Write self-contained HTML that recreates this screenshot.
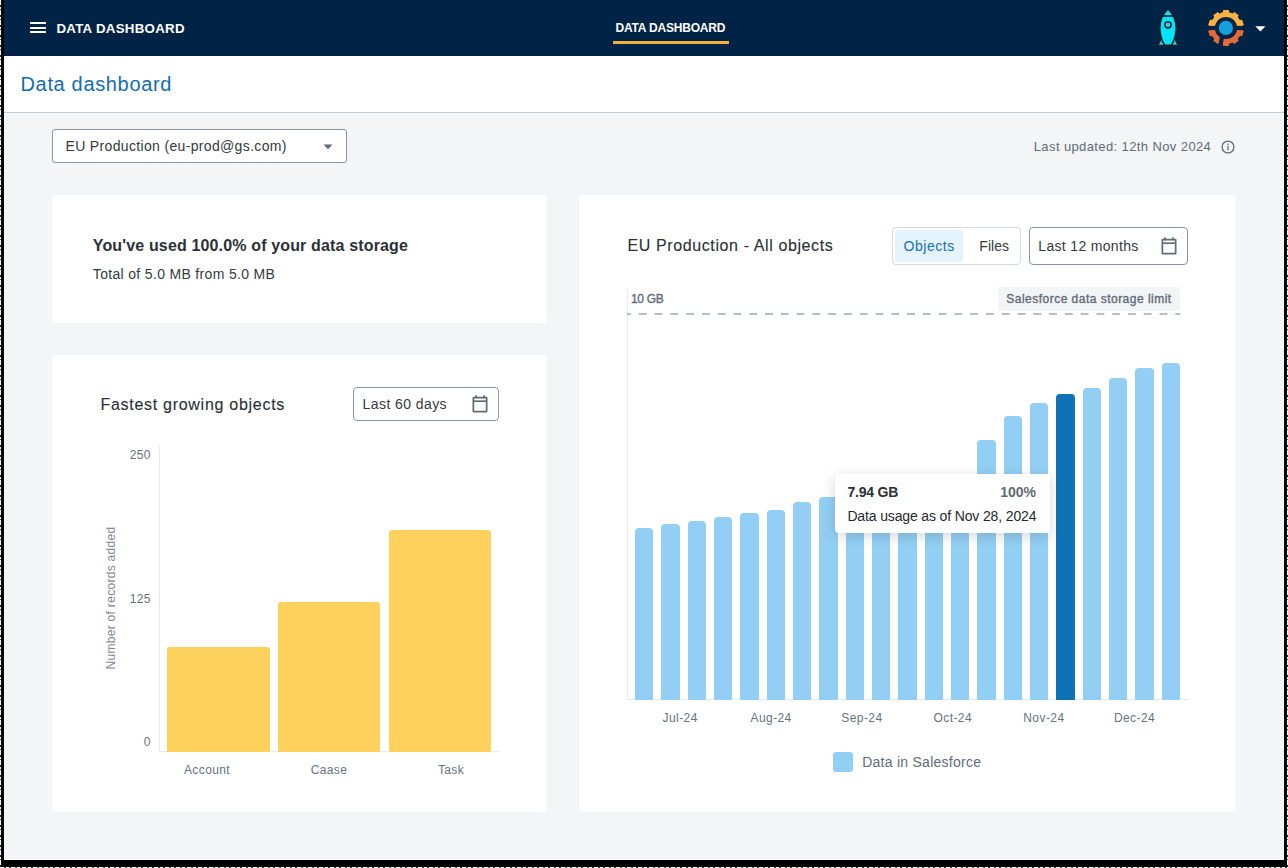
<!DOCTYPE html>
<html><head><meta charset="utf-8"><title>Data dashboard</title>
<style>
html,body{margin:0;padding:0;width:1288px;height:868px;overflow:hidden;background:#000;}
body{position:relative;font-family:"Liberation Sans",sans-serif;}
.t{position:absolute;white-space:nowrap;line-height:1;}
</style></head><body>
<div style="position:absolute;left:0px;top:0px;width:1.3px;height:868px;background:repeating-linear-gradient(180deg,#fff 0 5px,#222 5px 7px,#fff 7px 9px,#555 9px 10px)"></div>
<div style="position:absolute;left:1286.7px;top:0px;width:1.2999999999999545px;height:868px;background:repeating-linear-gradient(180deg,#fff 0 5px,#222 5px 7px,#fff 7px 9px,#4a7a4a 9px 10px)"></div>
<div style="position:absolute;left:0px;top:866.5px;width:1288px;height:1.5px;background:repeating-linear-gradient(90deg,#fff 0 4px,#3a6a3a 4px 6px,#fff 6px 9px,#333 9px 11px)"></div>
<div style="position:absolute;left:4px;top:0px;width:1280px;height:860px;background:#ffffff"></div>
<div style="position:absolute;left:5px;top:113px;width:1278px;height:746px;background:#f4f5f7"></div>
<div style="position:absolute;left:4px;top:0px;width:1280px;height:56px;background:#012345"></div>
<div style="position:absolute;left:30.2px;top:22.3px;width:15.4px;height:2px;background:#fff;border-radius:0.5px"></div>
<div style="position:absolute;left:30.2px;top:26.9px;width:15.4px;height:2px;background:#fff;border-radius:0.5px"></div>
<div style="position:absolute;left:30.2px;top:31.4px;width:15.4px;height:2px;background:#fff;border-radius:0.5px"></div>
<div class="t" style="left:56.40px;top:21.64px;font-size:13.3px;font-weight:700;color:#fff;letter-spacing:0.27px;">DATA DASHBOARD</div>
<div class="t" style="left:615.50px;top:22.44px;font-size:12px;font-weight:700;color:#fff;letter-spacing:-0.19px;">DATA DASHBOARD</div>
<div style="position:absolute;left:613px;top:41px;width:116px;height:3px;background:#f0b23c"></div>
<svg style="position:absolute;left:1157px;top:8px" width="23" height="39" viewBox="0 0 23 39">
<g stroke="#2a1e22" stroke-width="1.6" stroke-linejoin="round" fill="#00e5ff">
<path d="M4.8 29 L0.8 37.6 L7.5 37.6 Z"/><path d="M17.2 29 L21.2 37.6 L14.5 37.6 Z"/>
<path d="M11 0.8 C6 5.5 2.8 12.5 2.8 20 C2.8 27 5 33 7.6 37.3 L14.4 37.3 C17 33 19.2 27 19.2 20 C19.2 12.5 16 5.5 11 0.8 Z"/>
<path d="M5.6 8 L16.4 8" fill="none"/>
<circle cx="11" cy="16.8" r="3.1"/>
</g></svg>
<svg style="position:absolute;left:1205px;top:7px" width="42" height="42" viewBox="0 0 42 42">
<defs><mask id="gm"><rect width="42" height="42" fill="#fff"/><circle cx="21" cy="21" r="11.1" fill="#000"/>
<rect x="0" y="18.9" width="42" height="4.2" fill="#000"/>
<path d="M15.2 28 L13.0 40 L17.2 40 L19.4 28 Z" fill="#000"/></mask>
<clipPath id="gt"><rect x="0" y="0" width="42" height="21"/></clipPath>
<clipPath id="gb"><rect x="0" y="21" width="42" height="21"/></clipPath></defs>
<g mask="url(#gm)"><path d="M17.81 5.32 L18.26 3.11 L23.74 3.11 L24.19 5.32 L27.64 6.44 L29.30 4.92 L33.73 8.13 L32.80 10.19 L34.93 13.12 L37.17 12.87 L38.86 18.07 L36.90 19.19 L36.90 22.81 L38.86 23.93 L37.17 29.13 L34.93 28.88 L32.80 31.81 L33.73 33.87 L29.30 37.08 L27.64 35.56 L24.19 36.68 L23.74 38.89 L18.26 38.89 L17.81 36.68 L14.36 35.56 L12.70 37.08 L8.27 33.87 L9.20 31.81 L7.07 28.88 L4.83 29.13 L3.14 23.93 L5.10 22.81 L5.10 19.19 L3.14 18.07 L4.83 12.87 L7.07 13.12 L9.20 10.19 L8.27 8.13 L12.70 4.92 L14.36 6.44 Z" fill="#fbb241" clip-path="url(#gt)"/><path d="M17.81 5.32 L18.26 3.11 L23.74 3.11 L24.19 5.32 L27.64 6.44 L29.30 4.92 L33.73 8.13 L32.80 10.19 L34.93 13.12 L37.17 12.87 L38.86 18.07 L36.90 19.19 L36.90 22.81 L38.86 23.93 L37.17 29.13 L34.93 28.88 L32.80 31.81 L33.73 33.87 L29.30 37.08 L27.64 35.56 L24.19 36.68 L23.74 38.89 L18.26 38.89 L17.81 36.68 L14.36 35.56 L12.70 37.08 L8.27 33.87 L9.20 31.81 L7.07 28.88 L4.83 29.13 L3.14 23.93 L5.10 22.81 L5.10 19.19 L3.14 18.07 L4.83 12.87 L7.07 13.12 L9.20 10.19 L8.27 8.13 L12.70 4.92 L14.36 6.44 Z" fill="#e4683a" clip-path="url(#gb)"/></g>
<circle cx="20.9" cy="20.9" r="7.1" fill="#159fdc"/>
</svg>
<svg style="position:absolute;left:1254.5px;top:25.5px" width="11" height="6" viewBox="0 0 11 6"><path d="M0.3 0.3 L10.5 0.3 L5.4 5.6 Z" fill="#fff"/></svg>
<div class="t" style="left:20.50px;top:73.67px;font-size:20px;font-weight:400;color:#0f6eb3;letter-spacing:0.66px;">Data dashboard</div>
<div style="position:absolute;left:4px;top:112px;width:1280px;height:1px;background:#c4cad0"></div>
<div style="position:absolute;left:52px;top:129px;width:295px;height:34px;box-sizing:border-box;border:1px solid #8a96a2;border-radius:3px;background:#fff"></div>
<div class="t" style="left:65.50px;top:139.45px;font-size:14px;font-weight:400;color:#343a40;letter-spacing:0.34px;">EU Production (eu-prod@gs.com)</div>
<svg style="position:absolute;left:323px;top:143.5px" width="10" height="6" viewBox="0 0 10 6"><path d="M0.5 0.5 L9.5 0.5 L5 5.3 Z" fill="#5f6b77"/></svg>
<div class="t" style="left:1033.75px;top:140.00px;font-size:13px;font-weight:400;color:#5f6b77;letter-spacing:0.39px;">Last updated: 12th Nov 2024</div>
<svg style="position:absolute;left:1221px;top:139.5px" width="14" height="14" viewBox="0 0 14 14">
<circle cx="7" cy="7" r="5.9" fill="none" stroke="#5f6b77" stroke-width="1.3"/>
<rect x="6.35" y="6" width="1.3" height="4.2" fill="#5f6b77"/><circle cx="7" cy="4.3" r="0.8" fill="#5f6b77"/></svg>
<div style="position:absolute;left:52px;top:195px;width:495px;height:128px;background:#fff;border-radius:4px;box-shadow:0 0 1px rgba(0,0,0,0.04)"></div>
<div style="position:absolute;left:52px;top:355px;width:495px;height:457px;background:#fff;border-radius:4px;box-shadow:0 0 1px rgba(0,0,0,0.04)"></div>
<div style="position:absolute;left:579px;top:195px;width:657px;height:617px;background:#fff;border-radius:4px;box-shadow:0 0 1px rgba(0,0,0,0.04)"></div>
<div class="t" style="left:92.80px;top:237.86px;font-size:16px;font-weight:700;color:#2b3136;letter-spacing:0.15px;">You've used 100.0% of your data storage</div>
<div class="t" style="left:92.80px;top:266.65px;font-size:14px;font-weight:400;color:#343a40;letter-spacing:0.33px;">Total of 5.0 MB from 5.0 MB</div>
<div class="t" style="left:100.40px;top:396.76px;font-size:16px;font-weight:400;color:#2b3136;letter-spacing:0.72px;-webkit-text-stroke:0.12px #2b3136">Fastest growing objects</div>
<div style="position:absolute;left:353px;top:387px;width:146px;height:34px;box-sizing:border-box;border:1px solid #8a96a2;border-radius:4px;background:#fff"></div>
<div class="t" style="left:362.60px;top:397.05px;font-size:14px;font-weight:400;color:#343a40;letter-spacing:0.42px;">Last 60 days</div>
<svg style="position:absolute;left:471.8px;top:395px" width="17" height="18" viewBox="0 0 17 18">
<g fill="none" stroke="#5f6b77" stroke-width="1.7"><rect x="1.35" y="2.6" width="13.3" height="14.1" rx="0.3"/><path d="M1.4 6.2 L14.6 6.2"/><path d="M4 0.3 L4 3.2 M12 0.3 L12 3.2"/></g></svg>
<div style="position:absolute;left:159px;top:444.5px;width:1px;height:307.5px;background:#e8ebee"></div>
<div style="position:absolute;left:159px;top:751px;width:340px;height:1px;background:#e8ebee"></div>
<div class="t" style="right:1137.40px;top:449.14px;font-size:12px;font-weight:400;color:#66727e;letter-spacing:0.3px;">250</div>
<div class="t" style="right:1137.40px;top:592.84px;font-size:12px;font-weight:400;color:#66727e;letter-spacing:0.3px;">125</div>
<div class="t" style="right:1137.40px;top:736.14px;font-size:12px;font-weight:400;color:#66727e;letter-spacing:0.3px;">0</div>
<div style="position:absolute;left:167px;top:647px;width:102.5px;height:104.7px;background:#fdd15b;border-radius:3px 3px 0 0"></div>
<div style="position:absolute;left:277.7px;top:602px;width:102.3px;height:149.7px;background:#fdd15b;border-radius:3px 3px 0 0"></div>
<div style="position:absolute;left:388.7px;top:530px;width:102.3px;height:221.7px;background:#fdd15b;border-radius:3px 3px 0 0"></div>
<div class="t" style="left:107.00px;width:200px;text-align:center;top:764.04px;font-size:12px;font-weight:400;color:#66727e;letter-spacing:0.39px;">Account</div>
<div class="t" style="left:229.00px;width:200px;text-align:center;top:764.04px;font-size:12px;font-weight:400;color:#66727e;letter-spacing:0.39px;">Caase</div>
<div class="t" style="left:351.00px;width:200px;text-align:center;top:764.04px;font-size:12px;font-weight:400;color:#66727e;letter-spacing:0.39px;">Task</div>
<div class="t" style="left:10.5px;top:592.4px;width:200px;height:12px;text-align:center;font-size:12px;color:#7d8893;letter-spacing:0.3px;transform:rotate(-90deg)">Number of records added</div>
<div class="t" style="left:627.50px;top:238.46px;font-size:16px;font-weight:400;color:#2b3136;letter-spacing:0.61px;-webkit-text-stroke:0.12px #2b3136">EU Production - All objects</div>
<div style="position:absolute;left:892px;top:227px;width:129px;height:38px;box-sizing:border-box;border:1px solid #d6dbe0;border-radius:4px;background:#fff"></div>
<div style="position:absolute;left:895px;top:230px;width:68px;height:32px;background:#e5f3fc;border-radius:3px"></div>
<div class="t" style="left:903.50px;top:239.45px;font-size:14px;font-weight:400;color:#1270b4;letter-spacing:0.55px;">Objects</div>
<div class="t" style="left:979.30px;top:239.45px;font-size:14px;font-weight:400;color:#343a40;letter-spacing:0.03px;">Files</div>
<div style="position:absolute;left:1029px;top:227px;width:159px;height:38px;box-sizing:border-box;border:1px solid #8a96a2;border-radius:4px;background:#fff"></div>
<div class="t" style="left:1038.30px;top:239.45px;font-size:14px;font-weight:400;color:#343a40;letter-spacing:0.33px;">Last 12 months</div>
<svg style="position:absolute;left:1160.6px;top:236.8px" width="17" height="18" viewBox="0 0 17 18">
<g fill="none" stroke="#5f6b77" stroke-width="1.7"><rect x="1.35" y="2.6" width="13.3" height="14.1" rx="0.3"/><path d="M1.4 6.2 L14.6 6.2"/><path d="M4 0.3 L4 3.2 M12 0.3 L12 3.2"/></g></svg>
<div style="position:absolute;left:627px;top:289px;width:1px;height:411px;background:#e8ebee"></div>
<div style="position:absolute;left:627px;top:699px;width:561px;height:1px;background:#e8ebee"></div>
<div style="position:absolute;left:998px;top:287px;width:182px;height:24px;background:#f3f4f6;border-radius:3px"></div>
<div class="t" style="left:630.90px;top:292.84px;font-size:12px;font-weight:400;color:#5f6b77;letter-spacing:-0.3px;-webkit-text-stroke:0.35px #5f6b77">10 GB</div>
<div class="t" style="left:1006.30px;top:293.14px;font-size:12px;font-weight:400;color:#5f6b77;letter-spacing:0.48px;-webkit-text-stroke:0.35px #5f6b77">Salesforce data storage limit</div>
<svg style="position:absolute;left:627px;top:312px" width="554" height="4" viewBox="0 0 554 4"><path d="M0 2 L553 2" stroke="#b7bec6" stroke-width="2" stroke-dasharray="7.85 7.93" stroke-dashoffset="3.95"/></svg>
<div style="position:absolute;left:635.00px;top:528px;width:18.3px;height:172px;background:#93cff4;border-radius:4px 4px 0 0"></div>
<div style="position:absolute;left:661.34px;top:524px;width:18.3px;height:176px;background:#93cff4;border-radius:4px 4px 0 0"></div>
<div style="position:absolute;left:687.68px;top:521px;width:18.3px;height:179px;background:#93cff4;border-radius:4px 4px 0 0"></div>
<div style="position:absolute;left:714.02px;top:517px;width:18.3px;height:183px;background:#93cff4;border-radius:4px 4px 0 0"></div>
<div style="position:absolute;left:740.36px;top:513px;width:18.3px;height:187px;background:#93cff4;border-radius:4px 4px 0 0"></div>
<div style="position:absolute;left:766.70px;top:510px;width:18.3px;height:190px;background:#93cff4;border-radius:4px 4px 0 0"></div>
<div style="position:absolute;left:793.04px;top:502px;width:18.3px;height:198px;background:#93cff4;border-radius:4px 4px 0 0"></div>
<div style="position:absolute;left:819.38px;top:497px;width:18.3px;height:203px;background:#93cff4;border-radius:4px 4px 0 0"></div>
<div style="position:absolute;left:845.72px;top:492px;width:18.3px;height:208px;background:#93cff4;border-radius:4px 4px 0 0"></div>
<div style="position:absolute;left:872.06px;top:488px;width:18.3px;height:212px;background:#93cff4;border-radius:4px 4px 0 0"></div>
<div style="position:absolute;left:898.40px;top:484px;width:18.3px;height:216px;background:#93cff4;border-radius:4px 4px 0 0"></div>
<div style="position:absolute;left:924.74px;top:480px;width:18.3px;height:220px;background:#93cff4;border-radius:4px 4px 0 0"></div>
<div style="position:absolute;left:951.08px;top:476px;width:18.3px;height:224px;background:#93cff4;border-radius:4px 4px 0 0"></div>
<div style="position:absolute;left:977.42px;top:440px;width:18.3px;height:260px;background:#93cff4;border-radius:4px 4px 0 0"></div>
<div style="position:absolute;left:1003.76px;top:416px;width:18.3px;height:284px;background:#93cff4;border-radius:4px 4px 0 0"></div>
<div style="position:absolute;left:1030.10px;top:403px;width:18.3px;height:297px;background:#93cff4;border-radius:4px 4px 0 0"></div>
<div style="position:absolute;left:1056.44px;top:394px;width:18.3px;height:306px;background:#0e73b4;border-radius:4px 4px 0 0"></div>
<div style="position:absolute;left:1082.78px;top:388px;width:18.3px;height:312px;background:#93cff4;border-radius:4px 4px 0 0"></div>
<div style="position:absolute;left:1109.12px;top:378px;width:18.3px;height:322px;background:#93cff4;border-radius:4px 4px 0 0"></div>
<div style="position:absolute;left:1135.46px;top:368px;width:18.3px;height:332px;background:#93cff4;border-radius:4px 4px 0 0"></div>
<div style="position:absolute;left:1161.80px;top:363px;width:18.3px;height:337px;background:#93cff4;border-radius:4px 4px 0 0"></div>
<div class="t" style="left:580.20px;width:200px;text-align:center;top:712.04px;font-size:12px;font-weight:400;color:#66727e;letter-spacing:0.42px;">Jul-24</div>
<div class="t" style="left:671.10px;width:200px;text-align:center;top:712.04px;font-size:12px;font-weight:400;color:#66727e;letter-spacing:0.42px;">Aug-24</div>
<div class="t" style="left:761.90px;width:200px;text-align:center;top:712.04px;font-size:12px;font-weight:400;color:#66727e;letter-spacing:0.42px;">Sep-24</div>
<div class="t" style="left:852.80px;width:200px;text-align:center;top:712.04px;font-size:12px;font-weight:400;color:#66727e;letter-spacing:0.42px;">Oct-24</div>
<div class="t" style="left:943.90px;width:200px;text-align:center;top:712.04px;font-size:12px;font-weight:400;color:#66727e;letter-spacing:0.42px;">Nov-24</div>
<div class="t" style="left:1034.50px;width:200px;text-align:center;top:712.04px;font-size:12px;font-weight:400;color:#66727e;letter-spacing:0.42px;">Dec-24</div>
<div style="position:absolute;left:833px;top:752px;width:20px;height:20px;background:#93cff4;border-radius:3px"></div>
<div class="t" style="left:862.20px;top:754.95px;font-size:14px;font-weight:400;color:#5f6b77;letter-spacing:0.26px;">Data in Salesforce</div>
<div style="position:absolute;left:835px;top:474px;width:215px;height:59px;background:#fff;border-radius:4px;box-shadow:0 3px 14px rgba(20,30,40,0.18)"></div>
<div class="t" style="left:847.40px;top:484.85px;font-size:14px;font-weight:700;color:#2b3136;letter-spacing:-0.19px;">7.94 GB</div>
<div class="t" style="right:252.00px;top:484.85px;font-size:14px;font-weight:700;color:#5f6b77;letter-spacing:0px;">100%</div>
<div class="t" style="left:847.40px;top:509.15px;font-size:14px;font-weight:400;color:#24292e;letter-spacing:-0.14px;">Data usage as of Nov 28, 2024</div>
</body></html>
